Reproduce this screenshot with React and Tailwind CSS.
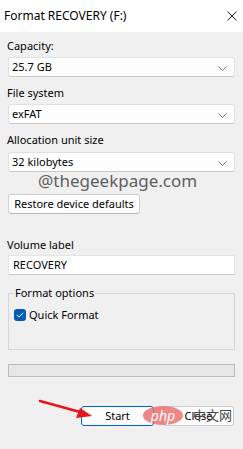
import React from "react";

function Chevron() {
  return (
    <svg width="9" height="5" viewBox="0 0 9 5" className="absolute right-[7px] top-[8px]">
      <path d="M0.5 0.5 L4.5 4.5 L8.5 0.5" fill="none" stroke="#7a7a7a" strokeWidth="1" />
    </svg>
  );
}

function Select({ value }) {
  return (
    <div className="relative mx-[8px] h-[20px] rounded-[3px] border border-[#e0e0e0] border-b-[#c8c8c8] bg-[#fdfdfd] pl-[3px] text-[11px] leading-[18px] text-black">
      {value}
      <Chevron />
    </div>
  );
}

export default function App() {
  return (
    <div
      className="relative w-[243px] h-[449px] overflow-hidden bg-[#f0f0f0] text-black"
      style={{ fontFamily: '"Noto Sans", "Liberation Sans", sans-serif' }}
    >
      <div className="flex h-[32px] items-center justify-between bg-white pl-[4px] pr-[6px]">
        <span className="text-[12px] leading-none">Format RECOVERY (F:)</span>
        <svg width="10" height="10" viewBox="0 0 10 10">
          <path d="M0.5 0.5 L9.5 9.5 M9.5 0.5 L0.5 9.5" stroke="#1a1a1a" strokeWidth="1" />
        </svg>
      </div>

      <div className="mt-[7px] px-[7px] text-[11px] leading-[14px]">Capacity:</div>
      <div className="mt-[4px]"><Select value="25.7 GB" /></div>

      <div className="mt-[9px] px-[7px] text-[11px] leading-[14px]">File system</div>
      <div className="mt-[4px]"><Select value="exFAT" /></div>

      <div className="mt-[9px] px-[7px] text-[11px] leading-[14px]">Allocation unit size</div>
      <div className="mt-[5px]"><Select value="32 kilobytes" /></div>

      <div className="mt-[22px] px-[8px]">
        <div className="flex h-[20px] w-[132px] items-center justify-center rounded-[3px] border border-[#d0d0d0] border-b-[#b8b8b8] bg-[#fdfdfd] text-[11px]">
          Restore device defaults
        </div>
      </div>

      <div className="mt-[24px] px-[7px] text-[11px] leading-[14px]">Volume label</div>
      <div className="mx-[8px] mt-[3px] h-[20px] border border-[#e4e4e4] border-b-[#c8c8c8] bg-white pl-[4px] text-[11px] leading-[18px]">
        RECOVERY
      </div>

      <div className="relative mx-[8px] mt-[18px] h-[57px] border border-[#d6d6d6]">
        <div className="absolute left-[5px] top-[-9px] bg-[#f0f0f0] px-[1px] text-[11px] leading-[16px]">
          Format options
        </div>
        <div className="mt-[14px] flex items-center pl-[5px]">
          <div className="flex h-[12px] w-[12px] items-center justify-center rounded-[3px] bg-[#005fb8]">
            <svg width="8" height="6" viewBox="0 0 8 6">
              <path d="M0.8 3 L3 5 L7.2 0.8" fill="none" stroke="white" strokeWidth="1" />
            </svg>
          </div>
          <span className="ml-[3px] text-[11px] leading-[14px]">Quick Format</span>
        </div>
      </div>

      <div className="mx-[8px] mt-[14px] h-[13px] border border-[#bcbcbc] bg-[#e6e6e6]" />

      <div className="mt-[29px] flex justify-end gap-[9px] pr-[9px]">
        <div className="flex h-[20px] w-[73px] items-center justify-center rounded-[3px] border border-[#0067c0] bg-[#fdfdfd] text-[11px]">
          Start
        </div>
        <div className="flex h-[20px] w-[71px] items-center justify-center rounded-[3px] border border-[#cccccc] bg-[#fdfdfd] text-[11px]">
          Close
        </div>
      </div>

      <div className="pointer-events-none absolute left-[38px] top-[170px] text-[17px] leading-[22px] text-[#5f5f5f]">
        @thegeekpage.com
      </div>

      <svg className="pointer-events-none absolute left-0 top-0" width="243" height="449" viewBox="0 0 243 449">
        <path d="M40 401 L80 412" stroke="#e8141b" strokeWidth="2.5" strokeLinecap="round" />
        <path d="M92 416 L76 418 L80 408 Z" fill="#e8141b" />
      </svg>

      <div className="pointer-events-none absolute left-[143px] top-[406px] flex h-[19px] w-[40px] items-center justify-center rounded-[50%] bg-[#ea6a6a]/80 text-[14px] italic leading-none text-white">
        php
      </div>
      <div className="pointer-events-none absolute left-[193px] top-[407px] text-[13px] leading-[16px] text-[#444]" style={{ fontFamily: '"Noto Sans CJK SC", sans-serif' }}>
        中文网
      </div>
    </div>
  );
}
